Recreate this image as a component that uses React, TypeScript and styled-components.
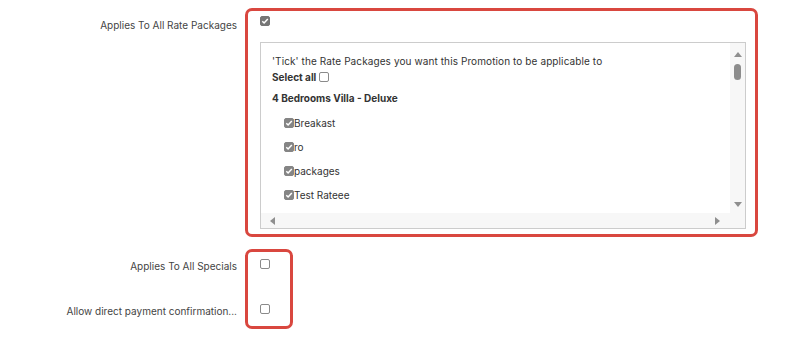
import styled, { createGlobalStyle } from 'styled-components';

const GlobalStyle = createGlobalStyle`
  html, body {
    margin: 0;
    padding: 0;
    background: #ffffff;
  }
  body {
    font-family: Inter, "Open Sans", "Liberation Sans", sans-serif;
    font-size: 10px;
    color: #333333;
  }
`;

const ratePackages = ['Breakast', 'ro', 'packages', 'Test Rateee'];

const Page = styled.div`
  width: 804px;
  height: 341px;
  padding-top: 8px;
  box-sizing: border-box;
  display: flex;
  flex-direction: column;
  gap: 12px;
`;

const FormGroup = styled.div`
  display: grid;
  grid-template-columns: 237px auto;
  column-gap: 8px;
  align-items: start;
`;

const LabelColumn = styled.div<{ $gap: number; $top: number }>`
  display: flex;
  flex-direction: column;
  align-items: flex-end;
  gap: ${(p) => p.$gap}px;
  padding-top: ${(p) => p.$top}px;
`;

const FieldLabel = styled.label`
  color: #444444;
  font-size: 10px;
  line-height: 14px;
  white-space: nowrap;
`;

const Highlight = styled.div<{ $width: number }>`
  width: ${(p) => p.$width}px;
  box-sizing: border-box;
  border: 3px solid #d9473f;
  border-radius: 7px;
`;

const PackagesField = styled(Highlight)`
  padding: 5px 9px 5px 12px;
  display: flex;
  flex-direction: column;
  gap: 16px;
`;

const SpecialsField = styled(Highlight)`
  padding: 7px 0 12px 12px;
  display: flex;
  flex-direction: column;
  gap: 35px;
`;

const Check = styled.span<{ $checked?: boolean; $tone?: string }>`
  display: inline-flex;
  align-items: center;
  justify-content: center;
  width: 10px;
  height: 10px;
  box-sizing: border-box;
  border-radius: 2px;
  flex-shrink: 0;
  border: 1px solid ${(p) => (p.$checked ? p.$tone || '#767676' : '#8a8a8a')};
  background: ${(p) => (p.$checked ? p.$tone || '#767676' : '#ffffff')};
`;

const ScrollBox = styled.div`
  border: 1px solid #cccccc;
  height: 187px;
  box-sizing: border-box;
  display: grid;
  grid-template-columns: 1fr 15px;
  grid-template-rows: 1fr 15px;
  overflow: hidden;
`;

const ScrollContent = styled.div`
  padding: 11px 0 0 11px;
  overflow: hidden;
  color: #333333;
`;

const Intro = styled.div`
  line-height: 14px;
  letter-spacing: 0.1px;
  white-space: nowrap;
`;

const SelectAll = styled.div`
  display: flex;
  align-items: center;
  gap: 3px;
  font-weight: 700;
  line-height: 16px;
  margin-top: 1px;
`;

const RoomTitle = styled.div`
  font-weight: 700;
  line-height: 14px;
  margin-top: 6px;
`;

const PackageList = styled.div`
  display: flex;
  flex-direction: column;
  gap: 10px;
  padding: 11px 0 0 12px;
`;

const PackageItem = styled.div`
  display: flex;
  align-items: center;
  line-height: 14px;
`;

const VTrack = styled.div`
  background: #f7f7f7;
  display: flex;
  flex-direction: column;
  align-items: center;
  padding-top: 9px;
`;

const HTrack = styled.div`
  background: #f7f7f7;
  display: flex;
  align-items: center;
  justify-content: space-between;
  padding: 0 10px 0 9px;
`;

const Corner = styled.div`
  background: #f7f7f7;
`;

const Thumb = styled.div`
  width: 7px;
  height: 16px;
  border-radius: 4px;
  background: #8c8c8c;
  margin-top: 7px;
`;

const DownArrow = styled.div`
  margin-top: auto;
  margin-bottom: 6px;
`;

const Tick = ({ color = '#ffffff' }: { color?: string }) => (
  <svg width="8" height="8" viewBox="0 0 8 8">
    <path d="M1.3 4.2 L3.1 6 L6.8 1.9" fill="none" stroke={color} strokeWidth="1.5" />
  </svg>
);

const Arrow = ({ dir }: { dir: 'up' | 'down' | 'left' | 'right' }) => {
  const points = {
    up: '0,5 4,0 8,5',
    down: '0,0 8,0 4,5',
    left: '5,0 5,8 0,4',
    right: '0,0 0,8 5,4',
  }[dir];
  const w = dir === 'up' || dir === 'down' ? 8 : 5;
  const h = dir === 'up' || dir === 'down' ? 5 : 8;
  return (
    <svg width={w} height={h} viewBox={`0 0 ${w} ${h}`} style={{ display: 'block' }}>
      <polygon points={points} fill="#8f8f8f" />
    </svg>
  );
};

const App = () => {
  return (
    <Page>
      <GlobalStyle />
      <FormGroup>
        <LabelColumn $gap={0} $top={10}>
          <FieldLabel>Applies To All Rate Packages</FieldLabel>
        </LabelColumn>
        <PackagesField $width={513}>
          <Check $checked>
            <Tick />
          </Check>
          <ScrollBox>
            <ScrollContent>
              <Intro>'Tick' the Rate Packages you want this Promotion to be applicable to</Intro>
              <SelectAll>
                Select all <Check />
              </SelectAll>
              <RoomTitle>4 Bedrooms Villa - Deluxe</RoomTitle>
              <PackageList>
                {ratePackages.map((name) => (
                  <PackageItem key={name}>
                    <Check $checked $tone="#858585">
                      <Tick />
                    </Check>
                    {name}
                  </PackageItem>
                ))}
              </PackageList>
            </ScrollContent>
            <VTrack>
              <Arrow dir="up" />
              <Thumb />
              <DownArrow>
                <Arrow dir="down" />
              </DownArrow>
            </VTrack>
            <HTrack>
              <Arrow dir="left" />
              <Arrow dir="right" />
            </HTrack>
            <Corner />
          </ScrollBox>
        </PackagesField>
      </FormGroup>
      <FormGroup>
        <LabelColumn $gap={31} $top={10}>
          <FieldLabel>Applies To All Specials</FieldLabel>
          <FieldLabel>Allow direct payment confirmation...</FieldLabel>
        </LabelColumn>
        <SpecialsField $width={48}>
          <Check />
          <Check />
        </SpecialsField>
      </FormGroup>
    </Page>
  );
};

export default App;
